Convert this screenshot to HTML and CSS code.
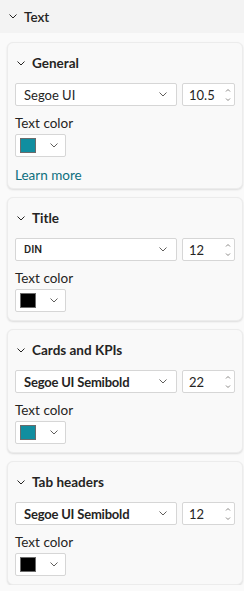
FILE: index.html
```html
<!DOCTYPE html>
<html lang="en">
<head>
  <meta charset="UTF-8">
  <title>Text settings</title>
  <link rel="stylesheet" href="styles.css">
</head>
<body>

<div class="section-head">
  <svg class="chev" viewBox="0 0 8 5"><path d="M0.5 0.5 L4 4 L7.5 0.5"/></svg>
  <span>Text</span>
</div>

<div class="card">
  <div class="card-head">
    <svg class="chev" viewBox="0 0 8 5"><path d="M0.5 0.5 L4 4 L7.5 0.5"/></svg>
    <span>General</span>
  </div>
  <div class="font-row">
    <div class="select"><span>Segoe UI</span><svg class="dd" viewBox="0 0 8 5"><path d="M0.5 0.5 L4 4 L7.5 0.5"/></svg></div>
    <div class="num"><span>10.5</span><svg class="spin" viewBox="0 0 6 14"><path d="M1 3.5 L3 1.5 L5 3.5 M1 10.5 L3 12.5 L5 10.5"/></svg></div>
  </div>
  <div class="label">Text color</div>
  <div class="color-btn"><span class="swatch teal"></span><svg class="dd" viewBox="0 0 8 5"><path d="M0.5 0.5 L4 4 L7.5 0.5"/></svg></div>
  <a class="learn" href="#">Learn more</a>
</div>

<div class="card">
  <div class="card-head">
    <svg class="chev" viewBox="0 0 8 5"><path d="M0.5 0.5 L4 4 L7.5 0.5"/></svg>
    <span>Title</span>
  </div>
  <div class="font-row">
    <div class="select"><span class="din">DIN</span><svg class="dd" viewBox="0 0 8 5"><path d="M0.5 0.5 L4 4 L7.5 0.5"/></svg></div>
    <div class="num"><span>12</span><svg class="spin" viewBox="0 0 6 14"><path d="M1 3.5 L3 1.5 L5 3.5 M1 10.5 L3 12.5 L5 10.5"/></svg></div>
  </div>
  <div class="label">Text color</div>
  <div class="color-btn"><span class="swatch black"></span><svg class="dd" viewBox="0 0 8 5"><path d="M0.5 0.5 L4 4 L7.5 0.5"/></svg></div>
</div>

<div class="card">
  <div class="card-head">
    <svg class="chev" viewBox="0 0 8 5"><path d="M0.5 0.5 L4 4 L7.5 0.5"/></svg>
    <span>Cards and KPIs</span>
  </div>
  <div class="font-row">
    <div class="select"><span class="semi">Segoe UI Semibold</span><svg class="dd" viewBox="0 0 8 5"><path d="M0.5 0.5 L4 4 L7.5 0.5"/></svg></div>
    <div class="num"><span>22</span><svg class="spin" viewBox="0 0 6 14"><path d="M1 3.5 L3 1.5 L5 3.5 M1 10.5 L3 12.5 L5 10.5"/></svg></div>
  </div>
  <div class="label">Text color</div>
  <div class="color-btn"><span class="swatch teal"></span><svg class="dd" viewBox="0 0 8 5"><path d="M0.5 0.5 L4 4 L7.5 0.5"/></svg></div>
</div>

<div class="card">
  <div class="card-head">
    <svg class="chev" viewBox="0 0 8 5"><path d="M0.5 0.5 L4 4 L7.5 0.5"/></svg>
    <span>Tab headers</span>
  </div>
  <div class="font-row">
    <div class="select"><span class="semi">Segoe UI Semibold</span><svg class="dd" viewBox="0 0 8 5"><path d="M0.5 0.5 L4 4 L7.5 0.5"/></svg></div>
    <div class="num"><span>12</span><svg class="spin" viewBox="0 0 6 14"><path d="M1 3.5 L3 1.5 L5 3.5 M1 10.5 L3 12.5 L5 10.5"/></svg></div>
  </div>
  <div class="label">Text color</div>
  <div class="color-btn"><span class="swatch black"></span><svg class="dd" viewBox="0 0 8 5"><path d="M0.5 0.5 L4 4 L7.5 0.5"/></svg></div>
</div>

</body>
</html>
```

FILE: styles.css
```css
body {
  margin: 0;
  background: #fafafa;
  font-family: "Segoe UI", Lato, "Open Sans", sans-serif;
  color: #252423;
  font-size: 13px;
}
svg path {
  fill: none;
  stroke: currentColor;
  stroke-width: 1;
}
.section-head {
  height: 33px;
  background: #f3f3f3;
  display: flex;
  align-items: center;
  padding-left: 9px;
  gap: 7px;
  font-size: 13.5px;
  font-weight: 600;
}
.chev {
  width: 8px;
  height: 5px;
  color: #252423;
}
.card {
  margin: 8px 1px 0 7px;
  padding: 0 7px 8px 7px;
  background: #f9f9f9;
  border: 1px solid #ececec;
  border-radius: 6px;
  box-shadow: 0 1px 2px rgba(0, 0, 0, 0.12);
}
.section-head + .card {
  margin-top: 9px;
}
.card-head {
  height: 40px;
  display: flex;
  align-items: center;
  gap: 7px;
  padding-left: 2px;
  font-weight: 700;
  font-size: 13.5px;
}
.font-row {
  display: flex;
  gap: 5px;
}
.select, .num, .color-btn {
  height: 23px;
  box-sizing: border-box;
  background: #fff;
  border: 1px solid #d6d6d6;
  border-radius: 2px;
  display: flex;
  align-items: center;
}
.select {
  width: 162px;
  padding: 0 9px 0 8px;
  justify-content: space-between;
  font-size: 13px;
}
.select .semi {
  font-weight: 700;
  letter-spacing: -0.2px;
}
.select .din {
  font-size: 11px;
  font-weight: 500;
  font-family: Roboto, "Liberation Sans", sans-serif;
}
.dd {
  width: 8px;
  height: 5px;
  color: #605e5c;
}
.num {
  width: 53px;
  padding: 0 3px 0 6px;
  justify-content: space-between;
  font-size: 13px;
}
.spin {
  width: 6px;
  height: 14px;
  color: #8a8886;
}
.label {
  margin-top: 8px;
  line-height: 18px;
  font-size: 13.5px;
}
.color-btn {
  margin-top: 2px;
  width: 51px;
  padding: 0 7px 0 4px;
  justify-content: space-between;
}
.swatch {
  width: 16px;
  height: 15px;
  box-sizing: border-box;
  border: 1px solid #6b6b6b;
}
.swatch.teal {
  background: #118ea0;
}
.swatch.black {
  background: #000;
}
.learn {
  display: block;
  margin-top: 10px;
  margin-bottom: -3px;
  line-height: 16px;
  color: #0e6f7e;
  text-decoration: none;
  font-size: 13.5px;
}
```
